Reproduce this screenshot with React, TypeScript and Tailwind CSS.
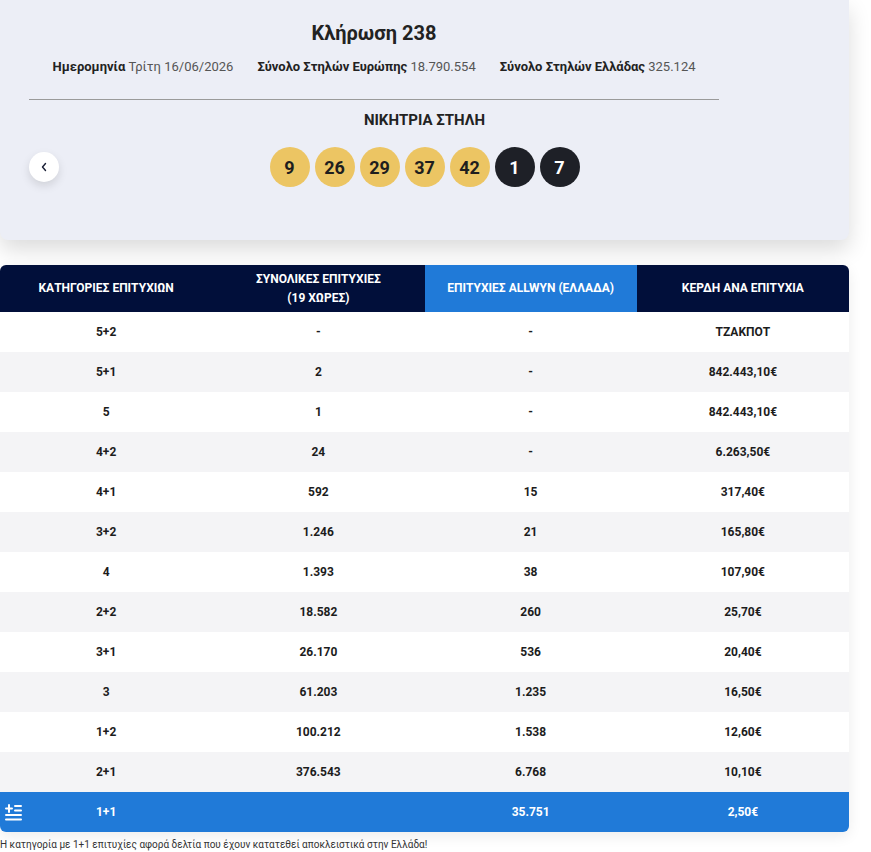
import React from "react";

const rows: [string, string, string, string][] = [
  ["5+2", "-", "-", "ΤΖΑΚΠΟΤ"],
  ["5+1", "2", "-", "842.443,10€"],
  ["5", "1", "-", "842.443,10€"],
  ["4+2", "24", "-", "6.263,50€"],
  ["4+1", "592", "15", "317,40€"],
  ["3+2", "1.246", "21", "165,80€"],
  ["4", "1.393", "38", "107,90€"],
  ["2+2", "18.582", "260", "25,70€"],
  ["3+1", "26.170", "536", "20,40€"],
  ["3", "61.203", "1.235", "16,50€"],
  ["1+2", "100.212", "1.538", "12,60€"],
  ["2+1", "376.543", "6.768", "10,10€"],
];

const balls = [
  { n: "9", star: false },
  { n: "26", star: false },
  { n: "29", star: false },
  { n: "37", star: false },
  { n: "42", star: false },
  { n: "1", star: true },
  { n: "7", star: true },
];

function FlagIcon() {
  return (
    <svg width="18" height="17" viewBox="0 0 18 17" fill="none" stroke="white" strokeWidth="2" strokeLinecap="round">
      <line x1="4" y1="1" x2="4" y2="8" />
      <line x1="1" y1="4.5" x2="7" y2="4.5" />
      <line x1="10" y1="2" x2="16" y2="2" />
      <line x1="10" y1="6.5" x2="16" y2="6.5" />
      <line x1="1" y1="11" x2="16" y2="11" />
      <line x1="1" y1="15.5" x2="16" y2="15.5" />
    </svg>
  );
}

export default function App() {
  return (
    <div className="min-h-[852px] w-[871px] bg-white text-[#1f1f1f]" style={{ fontFamily: "Roboto, 'Noto Sans', sans-serif" }}>
      {/* Top card */}
      <div className="w-[849px] h-[240px] bg-[#eceef6] rounded-b-lg shadow-[0_10px_22px_rgba(0,0,0,0.14)] pt-[21px]">
        <div className="w-[690px] ml-[29px] flex flex-col items-center">
          <div className="text-[20px] leading-[24px] font-bold text-[#222]">Κλήρωση 238</div>
          <div className="mt-[13px] h-[18px] flex items-center gap-[24px] text-[13px] leading-[18px]">
            <span>
              <span className="font-bold text-[#222]">Ημερομηνία</span>{" "}
              <span className="text-[#555]">Τρίτη 16/06/2026</span>
            </span>
            <span>
              <span className="font-bold text-[#222]">Σύνολο Στηλών Ευρώπης</span>{" "}
              <span className="text-[#555]">18.790.554</span>
            </span>
            <span>
              <span className="font-bold text-[#222]">Σύνολο Στηλών Ελλάδας</span>{" "}
              <span className="text-[#555]">325.124</span>
            </span>
          </div>
          <div className="mt-[23px] w-full border-t border-[#9a9a9a]" />
        </div>
        <div className="mt-[10px] text-center text-[15px] leading-[20px] font-bold text-[#222]">ΝΙΚΗΤΡΙΑ ΣΤΗΛΗ</div>
        <div className="relative mt-[17px] flex justify-center gap-[5px]">
          <button className="absolute left-[29px] top-[5px] w-[30px] h-[30px] rounded-full bg-white shadow-[0_4px_10px_rgba(0,0,0,0.12)] flex items-center justify-center">
            <svg width="8" height="10" viewBox="0 0 8 10" fill="none" stroke="#1a1f36" strokeWidth="1.4" strokeLinecap="round" strokeLinejoin="round">
              <polyline points="5.5,1.5 2.5,5 5.5,8.5" />
            </svg>
          </button>
          {balls.map((b, i) => (
            <div
              key={i}
              className={
                b.star
                  ? "w-[40px] h-[40px] rounded-full bg-[#1e2027] text-white flex items-center justify-center text-[18px] font-bold"
                  : "w-[40px] h-[40px] rounded-full bg-[#ecc563] text-[#1e1e1e] flex items-center justify-center text-[18px] font-bold"
              }
            >
              {b.n}
            </div>
          ))}
        </div>
      </div>

      {/* Table */}
      <div className="mt-[25px] w-[849px] rounded-md overflow-hidden shadow-[0_4px_14px_rgba(0,0,0,0.08)]">
        <div className="grid grid-cols-4 h-[47px] bg-[#010f3a] text-white text-[12px] font-bold leading-[19px]">
          <div className="flex items-center justify-center text-center">ΚΑΤΗΓΟΡΙΕΣ ΕΠΙΤΥΧΙΩΝ</div>
          <div className="flex items-center justify-center text-center">
            ΣΥΝΟΛΙΚΕΣ ΕΠΙΤΥΧΙΕΣ
            <br />
            (19 ΧΩΡΕΣ)
          </div>
          <div className="flex items-center justify-center text-center bg-[#207ad8]">ΕΠΙΤΥΧΙΕΣ ALLWYN (ΕΛΛΑΔΑ)</div>
          <div className="flex items-center justify-center text-center">ΚΕΡΔΗ ΑΝΑ ΕΠΙΤΥΧΙΑ</div>
        </div>
        {rows.map((r, i) => (
          <div
            key={i}
            className={
              i % 2 === 0
                ? "grid grid-cols-4 h-[40px] bg-white text-[12px] font-bold text-[#1c1c1c]"
                : "grid grid-cols-4 h-[40px] bg-[#f4f4f6] text-[12px] font-bold text-[#1c1c1c]"
            }
          >
            {r.map((c, j) => (
              <div key={j} className="flex items-center justify-center">
                {c}
              </div>
            ))}
          </div>
        ))}
        <div className="relative grid grid-cols-4 h-[40px] bg-[#207ad8] text-white text-[12px] font-bold">
          <div className="absolute left-[5px] top-[12px]">
            <FlagIcon />
          </div>
          <div className="flex items-center justify-center">1+1</div>
          <div className="flex items-center justify-center"></div>
          <div className="flex items-center justify-center">35.751</div>
          <div className="flex items-center justify-center">2,50€</div>
        </div>
      </div>
      <div className="mt-[6px] text-[10px] leading-[13px] text-[#333]">
        Η κατηγορία με 1+1 επιτυχίες αφορά δελτία που έχουν κατατεθεί αποκλειστικά στην Ελλάδα!
      </div>
    </div>
  );
}
